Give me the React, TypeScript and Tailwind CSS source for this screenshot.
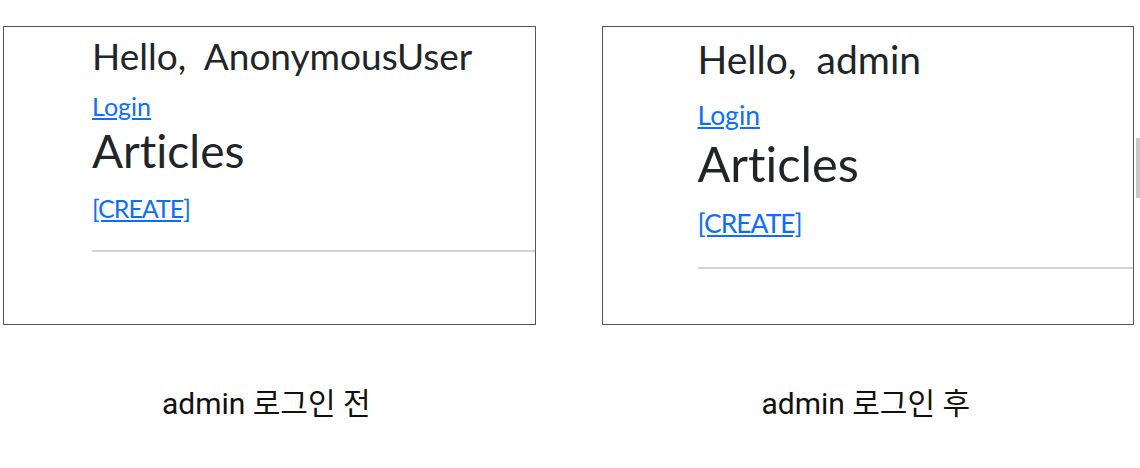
import React from "react";

const sans = { fontFamily: 'Lato, "Noto Sans", sans-serif' };
const kr = { fontFamily: 'Roboto, "Noto Sans CJK KR", sans-serif' };

export default function App() {
  return (
    <div className="w-[1140px] h-[468px] bg-white relative overflow-hidden [font-variant-ligatures:none]" style={sans}>
      <div className="flex pt-[26px]">
        {/* Left column */}
        <div className="ml-[3px] w-[533px] flex flex-col">
          <div className="h-[299px] border border-[#555] flex flex-col pl-[88px] pt-[10px]">
            <div className="text-[37px] leading-none text-[#212529] whitespace-pre">Hello,  AnonymousUser</div>
            <a href="#" className="mt-[20px] text-[25px] leading-none text-[#0d6efd] underline w-fit">Login</a>
            <div className="mt-[9px] text-[46px] leading-none text-[#212529]">Articles</div>
            <a href="#" className="mt-[22px] text-[25px] leading-none text-[#0d6efd] underline tracking-[-1px] w-fit">[CREATE]</a>
            <div className="mt-[29px] h-[2px] bg-[#d4d4d4]" />
          </div>
          <div className="mt-[64px] pr-[6px] text-center text-[30px] leading-none text-[#111]" style={kr}>
            admin 로그인 전
          </div>
        </div>
        {/* Right column */}
        <div className="ml-[66px] w-[533px] flex flex-col">
          <div className="h-[299px] border border-[#555] flex flex-col pl-[95px] pt-[13px]">
            <div className="text-[39px] leading-none text-[#212529] whitespace-pre">Hello,  admin</div>
            <a href="#" className="mt-[23px] text-[26.5px] leading-none text-[#0d6efd] underline w-fit">Login</a>
            <div className="mt-[10px] text-[48.7px] leading-none text-[#212529]">Articles</div>
            <a href="#" className="mt-[23px] text-[26.5px] leading-none text-[#0d6efd] underline tracking-[-1px] w-fit">[CREATE]</a>
            <div className="mt-[30px] h-[2px] bg-[#d4d4d4]" />
          </div>
          <div className="mt-[64px] pr-[4px] text-center text-[30px] leading-none text-[#111]" style={kr}>
            admin 로그인 후
          </div>
        </div>
        <div className="ml-[2px] mt-[112px] w-[4px] h-[60px] bg-[#c8c8c8]" />
      </div>
    </div>
  );
}
